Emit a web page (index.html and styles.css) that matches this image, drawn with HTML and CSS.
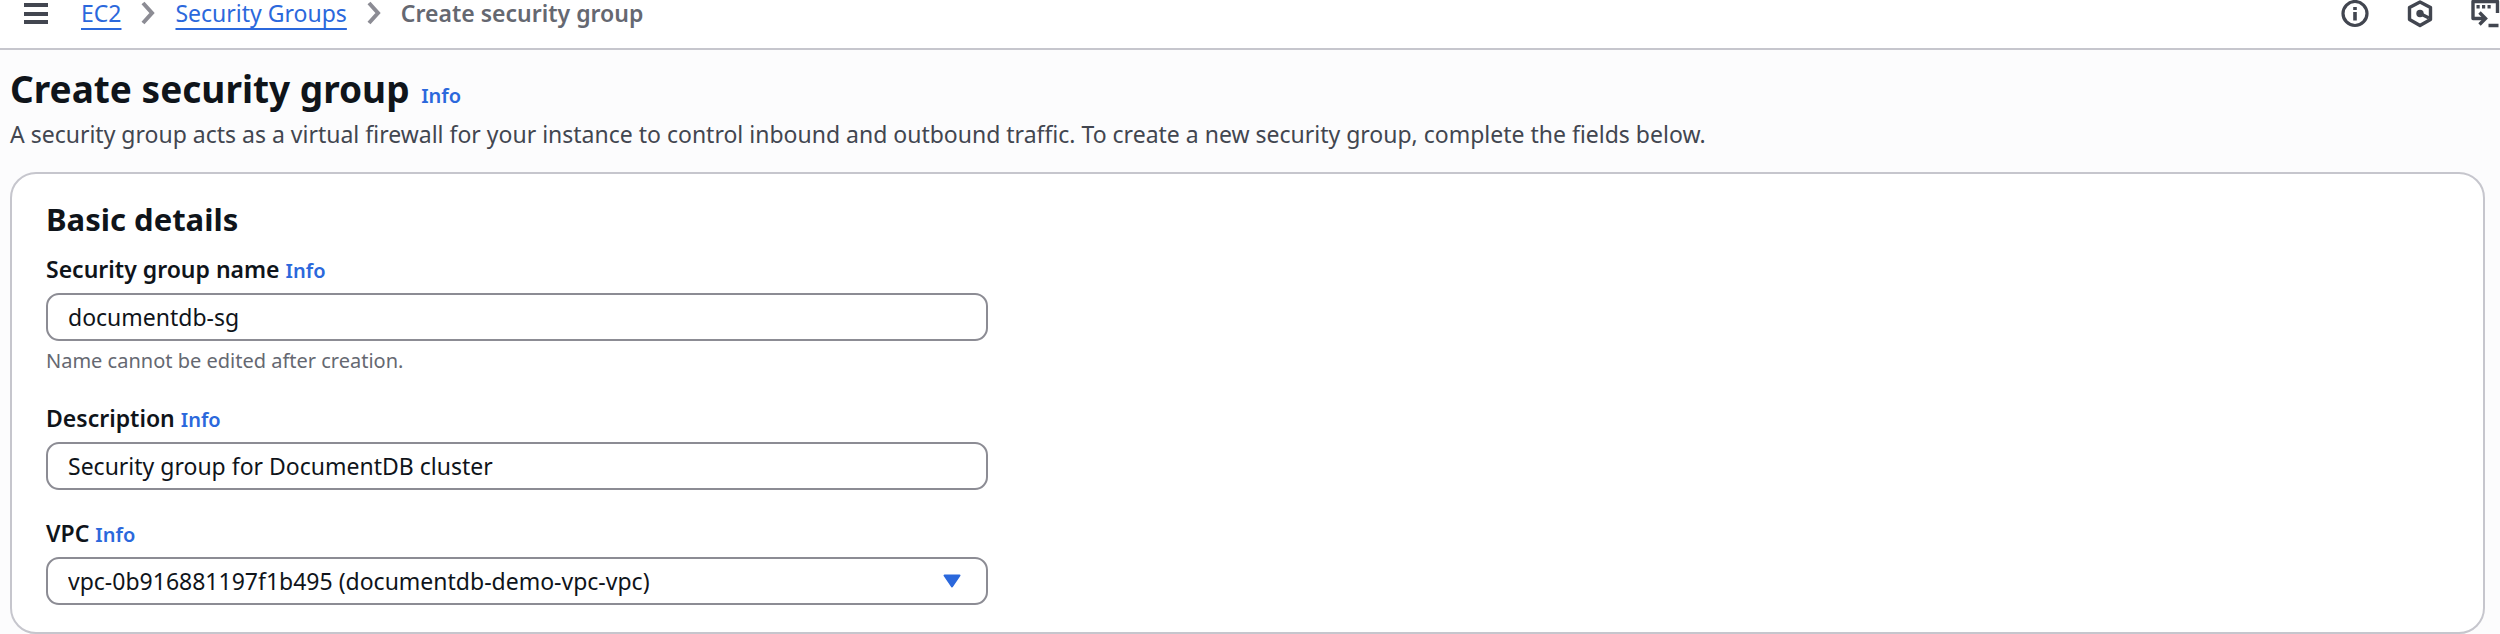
FILE: index.html
```html
<!DOCTYPE html>
<html lang="en">
<head>
<meta charset="UTF-8">
<meta name="viewport" content="width=device-width, initial-scale=1.0">
<title>Create security group | EC2</title>
<link rel="stylesheet" href="styles.css">
</head>
<body>
  <header class="topbar">
    <button class="icon-button" type="button" aria-label="Open navigation">
      <svg width="26" height="28" viewBox="0 0 26 28" stroke="#424650" stroke-width="4">
        <path d="M1 5h24M1 14h24M1 22h24"/>
      </svg>
    </button>
    <nav class="breadcrumbs" aria-label="Breadcrumbs">
      <a href="#">EC2</a>
      <svg width="14" height="24" viewBox="0 0 14 24" fill="none" stroke="#8c8c94" stroke-width="4"><path d="M2 2l9 10-9 10"/></svg>
      <a href="#">Security Groups</a>
      <svg width="14" height="24" viewBox="0 0 14 24" fill="none" stroke="#8c8c94" stroke-width="4"><path d="M2 2l9 10-9 10"/></svg>
      <span class="current">Create security group</span>
    </nav>
    <div class="tools">
      <button class="icon-button" type="button" aria-label="Info panel">
        <svg width="28" height="28" viewBox="0 0 28 28" fill="none" stroke="#424650">
          <circle cx="14" cy="13.500" r="12" stroke-width="3.200"/>
          <path d="M14 7v3M14 12v8.500" stroke-width="3.600"/>
        </svg>
      </button>
      <button class="icon-button" type="button" aria-label="Diagnostics">
        <svg width="28" height="28" viewBox="0 0 28 28" fill="none" stroke="#424650" stroke-width="3.400">
          <path d="M14 2l10.500 5.500v12L14 25.500 3.500 19.500v-12z" stroke-linejoin="round"/>
          <circle cx="14" cy="13.500" r="3.700" fill="#424650" stroke="none"/>
          <path d="M14 13.500l9 4.500"/>
        </svg>
      </button>
      <button class="icon-button" type="button" aria-label="CloudShell">
        <svg width="29" height="28" viewBox="0 0 29 28" fill="none" stroke="#424650" stroke-width="3.400">
          <path d="M14 18.500H2V1.500h24.500V13" stroke-linejoin="round"/>
          <path d="M8.500 12.500l6 6-6 6"/>
          <path d="M5.500 6.800h3.200M11 6.800h3.200M16.500 6.800h3.200M17.500 25.500h10"/>
        </svg>
      </button>
    </div>
  </header>

  <main class="content">
    <h1>Create security group <a class="info" href="#">Info</a></h1>
    <p class="intro">A security group acts as a virtual firewall for your instance to control inbound and outbound traffic. To create a new security group, complete the fields below.</p>

    <form class="card">
      <h2>Basic details</h2>

      <div class="field">
        <div class="field-label"><label for="groupName">Security group name</label> <a class="info" href="#">Info</a></div>
        <input type="text" id="groupName" name="groupName" value="documentdb-sg">
        <p class="hint">Name cannot be edited after creation.</p>
      </div>

      <div class="field">
        <div class="field-label"><label for="description">Description</label> <a class="info" href="#">Info</a></div>
        <input type="text" id="description" name="description" value="Security group for DocumentDB cluster">
      </div>

      <div class="field">
        <div class="field-label"><label for="vpc">VPC</label> <a class="info" href="#">Info</a></div>
        <div class="select-wrap">
          <select id="vpc" name="vpc">
            <option>vpc-0b916881197f1b495 (documentdb-demo-vpc-vpc)</option>
          </select>
          <svg class="caret" width="18" height="14" viewBox="0 0 18 14" fill="#2b68dc" stroke="#2b68dc" stroke-width="2" stroke-linejoin="round"><path d="M1.500 1.500h15L9 12.500z"/></svg>
        </div>
      </div>
    </form>
  </main>
</body>
</html>
```
FILE: styles.css
```css
* {
  box-sizing: border-box;
}
body {
  margin: 0;
  background-color: #fcfcfd;
  color: #0f141a;
  font-family: "Noto Sans", sans-serif;
  font-size: 23px;
  line-height: 32px;
}
a {
  color: #2b68dc;
}
svg {
  display: block;
  flex: none;
}
/* Top bar */
.topbar {
  display: flex;
  align-items: flex-start;
  height: 50px;
  padding: 0 0 0 23px;
  background-color: #fff;
  border-bottom: 2px solid #c6c6cd;
}
.icon-button {
  padding: 0;
  border: none;
  background: none;
  cursor: pointer;
}
.breadcrumbs {
  display: flex;
  align-items: center;
  gap: 20px;
  height: 26px;
  margin-left: 32px;
}
.breadcrumbs a {
  text-decoration-thickness: 2px;
  text-underline-offset: 6px;
}
.current {
  color: #656871;
  font-weight: 600;
}
.tools {
  display: flex;
  gap: 37px;
  margin-left: auto;
}
/* Page content */
.content {
  padding: 17px 15px 0 10px;
}
h1, h2, p {
  margin: 0;
}
h1 {
  font-size: 37px;
  font-weight: 700;
  line-height: 44px;
}
.info {
  font-size: 20px;
  font-weight: 600;
  line-height: 1;
  text-decoration: none;
}
h1 .info {
  margin-left: 2px;
}
.intro {
  margin-top: 7px;
  color: #424650;
}
.card {
  margin-top: 22px;
  padding: 25px 34px 27px;
  background-color: #fff;
  border: 2px solid #c6c6cd;
  border-radius: 26px;
}
h2 {
  font-size: 31px;
  font-weight: 700;
  line-height: 40px;
}
.field {
  width: 40%;
  max-width: 942px;
  margin-top: 27px;
}
h2 + .field {
  margin-top: 14px;
}
.field-label {
  margin-bottom: 8px;
}
.field-label label {
  font-weight: 600;
}
input, select {
  display: block;
  width: 100%;
  height: 48px;
  padding: 0 20px;
  background-color: #fff;
  color: #0f141a;
  border: 2px solid #8c8c94;
  border-radius: 13px;
  font: inherit;
}
select {
  appearance: none;
}
.hint {
  margin-top: 6px;
  color: #656871;
  font-size: 20px;
  line-height: 28px;
}
.select-wrap {
  position: relative;
}
/* Arrow drawn over the select */
.caret {
  position: absolute;
  top: 17px;
  right: 27px;
  pointer-events: none;
}
```
